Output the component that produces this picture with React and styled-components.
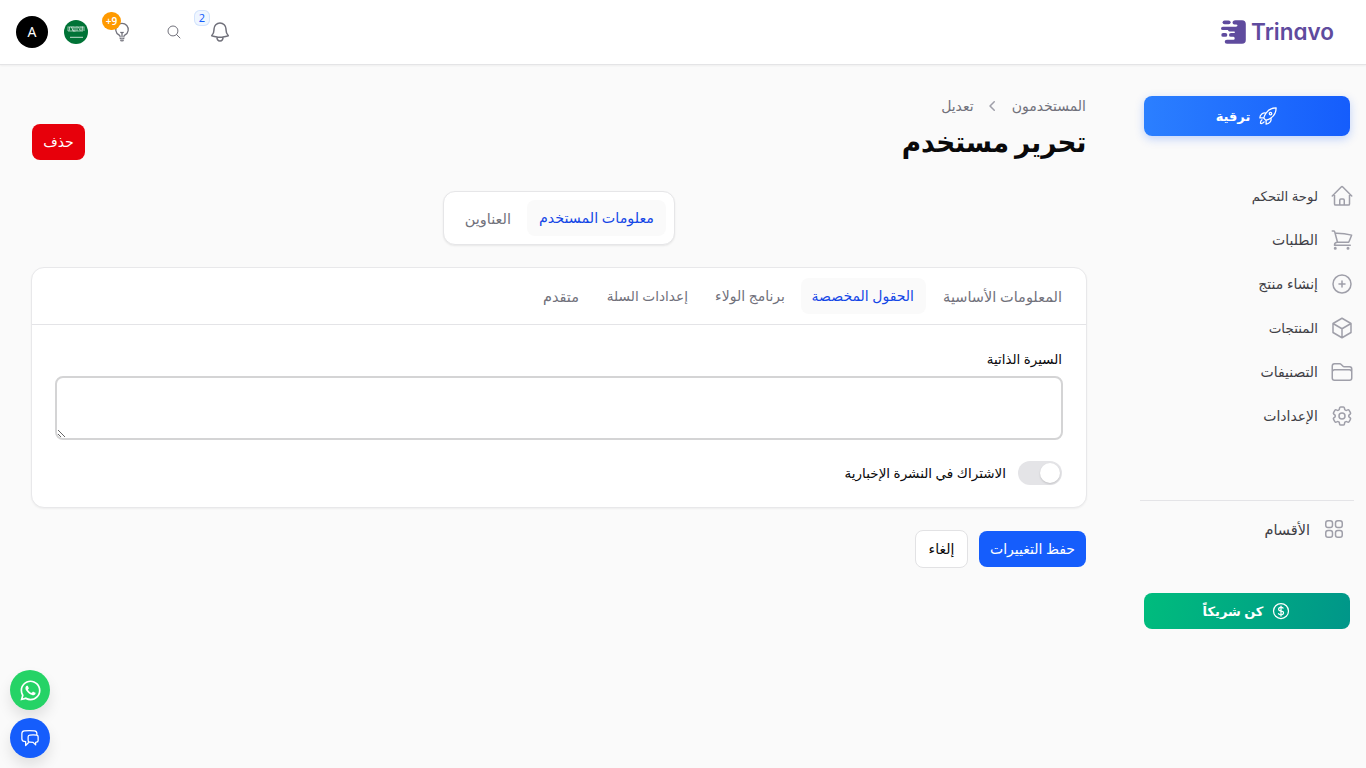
import React, { useState } from 'react';
import styled, { createGlobalStyle } from 'styled-components';
import {
  HiMiniChevronLeft,
  HiOutlineBell,
  HiOutlineChatBubbleLeftRight,
  HiOutlineCog6Tooth,
  HiOutlineCube,
  HiOutlineCurrencyDollar,
  HiOutlineFolder,
  HiOutlineHome,
  HiOutlineLightBulb,
  HiOutlineMagnifyingGlass,
  HiOutlinePlusCircle,
  HiOutlineRocketLaunch,
  HiOutlineShoppingCart,
  HiOutlineSquares2X2,
} from 'react-icons/hi2';
import { FaWhatsapp } from 'react-icons/fa';

const GlobalStyle = createGlobalStyle`
  * { box-sizing: border-box; }
  body {
    margin: 0;
    background: #fafafa;
    color: #09090b;
    font-family: 'Noto Sans', 'DejaVu Sans', sans-serif;
    font-size: 14px;
    line-height: 20px;
    overflow: hidden;
  }
  button, textarea { font: inherit; }
  button { cursor: pointer; }
`;

const Page = styled.div`
  height: 100vh;
  display: flex;
  flex-direction: column;
`;

const Topbar = styled.header`
  height: 65px;
  flex: none;
  display: flex;
  align-items: center;
  justify-content: space-between;
  padding: 0 32px 1px 16px;
  background: #fff;
  border-bottom: 1px solid #e4e4e6;
  box-shadow: 0 1px 2px rgba(0, 0, 0, 0.05);
`;

const Brand = styled.div`
  display: flex;
  align-items: center;
  justify-content: space-between;
  width: 113px;
  height: 28px;
  color: #5f4b9e;
`;

const BrandName = styled.span`
  font-family: Inter, sans-serif;
  font-size: 22.5px;
  font-weight: 600;
  line-height: 28px;
  font-feature-settings: 'cv11';
`;

const Tools = styled.div`
  display: flex;
  align-items: center;
`;

const ToolButton = styled.button`
  position: relative;
  display: flex;
  align-items: center;
  justify-content: center;
  width: ${props => props.$size || 24}px;
  height: ${props => props.$size || 24}px;
  margin-right: ${props => props.$gap || 0}px;
  padding: 0;
  border: none;
  background: none;
  color: #71717b;
`;

const Avatar = styled.div`
  width: 32px;
  height: 32px;
  border-radius: 50%;
  background: #000;
  color: #fff;
  text-align: center;
  line-height: 32px;
`;

const Flag = styled.div`
  width: 24px;
  height: 24px;
  margin: 0 24px 0 16px;
  border-radius: 50%;
  overflow: hidden;
  svg { display: block; }
`;

const Badge = styled.span`
  position: absolute;
  text-align: center;
  direction: ltr;
`;

const TipsBadge = styled(Badge)`
  top: -10px;
  left: -10px;
  width: 19px;
  height: 18px;
  border-radius: 9px;
  background: #ff9a00;
  color: #fff;
  font-size: 10px;
  font-weight: 600;
  line-height: 18px;
`;

const CountBadge = styled(Badge)`
  top: -10px;
  left: -14px;
  width: 16px;
  height: 16px;
  border-radius: 6px;
  background: #eff6ff;
  box-shadow: 0 0 0 1px #d3e3fd inset;
  color: #155dfc;
  font-size: 11px;
  line-height: 16px;
`;

const Shell = styled.div`
  flex: 1;
  display: flex;
`;

const Sidebar = styled.aside`
  width: 280px;
  flex: none;
  padding: 31px 16px 0 0;
`;

const PromoButton = styled.button`
  display: flex;
  align-items: center;
  justify-content: center;
  gap: 8px;
  width: 206px;
  height: ${props => props.$height}px;
  padding: 0;
  border: none;
  border-radius: 8px;
  background: ${props => props.$background};
  box-shadow: ${props => props.$shadow || 'none'};
  color: #fff;
  font-size: 13px;
  font-weight: 700;
`;

const Menu = styled.nav`
  display: flex;
  flex-direction: column;
  gap: 4px;
  width: 214px;
  margin: 40px -4px 0 0;
`;

const MenuItem = styled.a`
  display: flex;
  align-items: center;
  gap: 12px;
  height: 40px;
  color: #3f3f46;
  font-size: ${props => props.$size || 14}px;
  svg { color: #9f9fa9; }
`;

const Sections = styled.div`
  width: 214px;
  margin: 64px -4px 44px 0;
  padding: 8px 8px 0 0;
  border-top: 1px solid #e4e4e7;
`;

const Main = styled.main`
  flex: 1;
  padding: 31px 0 0 32px;
`;

const Heading = styled.div`
  display: flex;
  align-items: flex-end;
  justify-content: space-between;
  height: 64px;
`;

const Crumbs = styled.div`
  display: flex;
  align-items: center;
  gap: 9px;
  height: 20px;
  color: #71717b;
  svg { color: #9f9fa9; }
`;

const Title = styled.h1`
  margin: 7px 0 1px;
  font-size: 28px;
  font-weight: 700;
  line-height: 36px;
  word-spacing: -1px;
  transform: scaleX(0.94);
  transform-origin: right;
`;

const Button = styled.button`
  height: ${props => (props.$outlined ? 38 : 36)}px;
  width: ${props => props.$width}px;
  padding: 0;
  border: ${props => (props.$outlined ? '1px solid #e2e2e4' : 'none')};
  border-radius: 8px;
  background: ${props => props.$background || '#fff'};
  color: ${props => (props.$outlined ? '#09090b' : '#fff')};
`;

const PageTabs = styled.div`
  display: flex;
  justify-content: center;
  gap: 4px;
  width: 232px;
  height: 54px;
  margin: 31px auto 22px;
  padding: 8px;
  border: 1px solid #e6e6e8;
  border-radius: 12px;
  background: #fff;
  box-shadow: 0 1px 2px rgba(0, 0, 0, 0.08);
`;

const Tab = styled.button`
  flex: none;
  width: ${props => props.$width}px;
  height: 36px;
  padding: 0 12px;
  border: none;
  border-radius: 8px;
  background: ${props => (props.$active ? '#fafafa' : 'transparent')};
  color: ${props => (props.$active ? '#1447e6' : '#71717b')};
  font-size: ${props => props.$size || 14}px;
  text-align: start;
  white-space: nowrap;
`;

const Card = styled.section`
  height: 241px;
  margin: 0 -1px;
  border: 1px solid #e8e8ea;
  border-radius: 13px;
  background: #fff;
  box-shadow: 0 1px 2px rgba(0, 0, 0, 0.05);
`;

const CardTabs = styled.div`
  display: flex;
  gap: 4px;
  height: 57px;
  padding: 10px 12px;
  border-bottom: 1px solid #e4e4e7;
`;

const Fields = styled.div`
  padding: 24px;
`;

const Label = styled.label`
  display: block;
  font-size: 13.4px;
`;

const Bio = styled.textarea`
  display: block;
  width: calc(100% + 2px);
  height: 64px;
  margin: 7px -1px 0;
  border: 2px solid #d4d4d5;
  border-radius: 8px;
  background: #fff;
  resize: vertical;
  outline: none;
`;

const ToggleRow = styled.div`
  display: flex;
  align-items: center;
  gap: 12px;
  margin-top: 21px;
  font-size: 13.5px;
`;

const Toggle = styled.button`
  display: flex;
  justify-content: ${props => (props.$on ? 'flex-end' : 'flex-start')};
  width: 44px;
  height: 24px;
  padding: 2px;
  border: none;
  border-radius: 12px;
  background: ${props => (props.$on ? '#155dfc' : '#e4e4e7')};
`;

const Knob = styled.span`
  width: 20px;
  height: 20px;
  border-radius: 50%;
  background: #fff;
  box-shadow: 0 1px 2px rgba(0, 0, 0, 0.15);
`;

const Actions = styled.div`
  display: flex;
  align-items: center;
  gap: 11px;
  margin-top: 22px;
`;

const Floating = styled.div`
  position: fixed;
  left: 10px;
  bottom: 10px;
  display: flex;
  flex-direction: column;
  gap: 8px;
`;

const FloatButton = styled.button`
  display: flex;
  align-items: center;
  justify-content: center;
  width: 40px;
  height: 40px;
  padding: 0;
  border: none;
  border-radius: 50%;
  background: ${props => props.$background};
  box-shadow: 0 8px 14px rgba(0, 0, 0, 0.1);
  color: #fff;
`;

const menu = [
  { label: 'لوحة التحكم', icon: HiOutlineHome, size: 13.3 },
  { label: 'الطلبات', icon: HiOutlineShoppingCart },
  { label: 'إنشاء منتج', icon: HiOutlinePlusCircle },
  { label: 'المنتجات', icon: HiOutlineCube, size: 13.5 },
  { label: 'التصنيفات', icon: HiOutlineFolder },
  { label: 'الإعدادات', icon: HiOutlineCog6Tooth },
];

const cardTabs = [
  { label: 'المعلومات الأساسية', width: 144, size: 14.5 },
  { label: 'الحقول المخصصة', width: 125 },
  { label: 'برنامج الولاء', width: 93 },
  { label: 'إعدادات السلة', width: 105, size: 13.7 },
  { label: 'متقدم', width: 61, size: 14.5 },
];

const pageTabs = [
  { label: 'معلومات المستخدم', width: 139, size: 14.3 },
  { label: 'العناوين', width: 71, size: 14.5 },
];

function LogoMark() {
  return (
    <svg width="25" height="24" viewBox="0 0 25 24" fill="currentColor">
      <path d="M14.500.2H21Q24.800.2 24.800 4v16q0 3.800-3.800 3.800H6q-2.300 0-2.300-2T6 19.800h6.500q1.200 0 1.200-1.500T12.500 16.800H10q-2 0-2-1.900T10 13h3q1 0 1-.8t-1-.8H8.500q-1.500 0-1.500-1.300H1.800Q0 10.100 0 8.400t1.800-1.700H15q1.500 0 1.500-1.100T15 4.500h-1.500q-2 0-2-2T14.500.2Z" />
      <rect x="1.600" y=".4" width="8" height="3.900" rx="1.950" />
      <rect x=".3" y="13" width="6" height="3.800" rx="1.900" />
    </svg>
  );
}

function SaudiFlag() {
  return (
    <svg width="24" height="24" viewBox="0 0 24 24">
      <rect width="24" height="24" fill="#007336" />
      <path
        d="M4 6.500v4.500M5.500 7v3.500M7 6.500l2 4M9 6.500v4.500h2.500M11 7v3.500M13 6.500v4.500M14.500 7l1.500 3.500M17 6.500v4.500M18.500 6.500v4M20 6.500v4.500M4 11h15M4.500 7h15"
        fill="none"
        stroke="#fff"
        strokeWidth=".8"
        opacity=".75"
      />
      <path d="M6 17.300h13" stroke="#fff" strokeWidth=".9" opacity=".85" />
    </svg>
  );
}

export default function App() {
  const [pageTab, setPageTab] = useState(0);
  const [cardTab, setCardTab] = useState(1);
  const [subscribed, setSubscribed] = useState(false);

  return (
    <Page dir="rtl">
      <GlobalStyle />
      <Topbar dir="ltr">
        <Tools>
          <Avatar>A</Avatar>
          <Flag><SaudiFlag /></Flag>
          <ToolButton $size={20} $gap={34}>
            <HiOutlineLightBulb size={20} />
            <TipsBadge>+9</TipsBadge>
          </ToolButton>
          <ToolButton $size={16} $gap={26}><HiOutlineMagnifyingGlass size={16} /></ToolButton>
          <ToolButton>
            <HiOutlineBell size={24} />
            <CountBadge>2</CountBadge>
          </ToolButton>
        </Tools>
        <Brand>
          <LogoMark />
          <BrandName>Trinavo</BrandName>
        </Brand>
      </Topbar>
      <Shell>
        <Sidebar>
          <PromoButton
            $height={40}
            $background="linear-gradient(90deg, #2b7fff, #155dfc)"
            $shadow="0 3px 10px rgba(21, 93, 252, 0.25)"
          >
            <HiOutlineRocketLaunch size={20} />
            ترقية
          </PromoButton>
          <Menu>
            {menu.map(({ label, icon: Icon, size }) => (
              <MenuItem key={label} $size={size}>
                <Icon size={24} />
                {label}
              </MenuItem>
            ))}
          </Menu>
          <Sections>
            <MenuItem $size={14.5}>
              <HiOutlineSquares2X2 size={24} />
              الأقسام
            </MenuItem>
          </Sections>
          <PromoButton $height={36} $background="linear-gradient(100deg, #00bc7d, #009689)">
            <HiOutlineCurrencyDollar size={20} />
            كن شريكاً
          </PromoButton>
        </Sidebar>
        <Main>
          <Heading>
            <div>
              <Crumbs>
                المستخدمون
                <HiMiniChevronLeft size={20} />
                تعديل
              </Crumbs>
              <Title>تحرير مستخدم</Title>
            </div>
            <Button $width={53} $background="#e7000b">حذف</Button>
          </Heading>
          <PageTabs>
            {pageTabs.map((tab, i) => (
              <Tab
                key={tab.label}
                $width={tab.width}
                $size={tab.size}
                $active={i === pageTab}
                onClick={() => setPageTab(i)}
              >
                {tab.label}
              </Tab>
            ))}
          </PageTabs>
          <Card>
            <CardTabs>
              {cardTabs.map((tab, i) => (
                <Tab
                  key={tab.label}
                  $width={tab.width}
                  $size={tab.size}
                  $active={i === cardTab}
                  onClick={() => setCardTab(i)}
                >
                  {tab.label}
                </Tab>
              ))}
            </CardTabs>
            <Fields>
              <Label htmlFor="bio">السيرة الذاتية</Label>
              <Bio id="bio" />
              <ToggleRow>
                <Toggle $on={subscribed} onClick={() => setSubscribed(!subscribed)}><Knob /></Toggle>
                <span>الاشتراك في النشرة الإخبارية</span>
              </ToggleRow>
            </Fields>
          </Card>
          <Actions>
            <Button $width={107} $background="#155dfc">حفظ التغييرات</Button>
            <Button $width={53} $outlined>إلغاء</Button>
          </Actions>
        </Main>
      </Shell>
      <Floating>
        <FloatButton $background="#25d366"><FaWhatsapp size={23} /></FloatButton>
        <FloatButton $background="#155dfc"><HiOutlineChatBubbleLeftRight size={20} /></FloatButton>
      </Floating>
    </Page>
  );
}
